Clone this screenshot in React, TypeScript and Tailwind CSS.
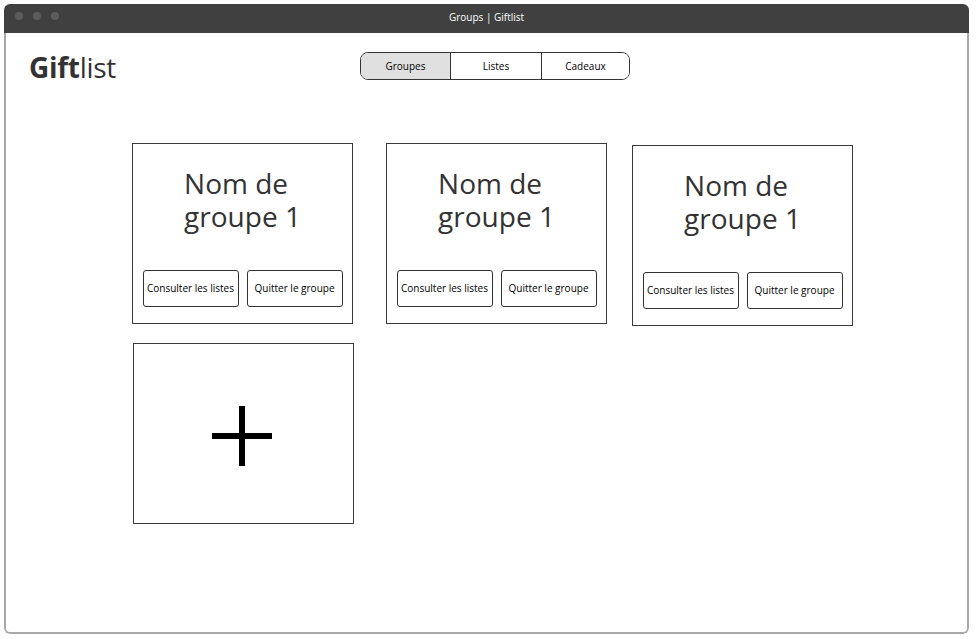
const font = { fontFamily: '"Open Sans", "Noto Sans", sans-serif' };

const tabs = [
  { label: "Groupes", active: true, width: "w-[89px]" },
  { label: "Listes", active: false, width: "w-[91px]" },
  { label: "Cadeaux", active: false, width: "w-[88px]" },
];

function GroupCard({ className }: { className: string }) {
  return (
    <div className={`flex h-[181px] w-[221px] flex-col items-center border border-[#3a3a3a] bg-white ${className}`}>
      <h2 className="mt-[23px] inline-block text-left text-[28px] leading-[33px] text-[#333]">
        Nom de
        <br />
        groupe 1
      </h2>
      <div className="mt-auto mb-[16px] flex gap-[8px]">
        <button className="h-[37px] w-[96px] rounded-[3px] border border-[#333] bg-white text-[10px] text-black">
          Consulter les listes
        </button>
        <button className="h-[37px] w-[96px] rounded-[3px] border border-[#333] bg-white text-[10px] text-black">
          Quitter le groupe
        </button>
      </div>
    </div>
  );
}

export default function App() {
  return (
    <div className="h-[639px] w-[979px] bg-white pt-[4px] pl-[4px]" style={font}>
      <div className="flex h-[630px] w-[965px] flex-col overflow-hidden rounded-t-[6px] rounded-b-[6px]">
        <div className="relative flex h-[29px] items-center justify-center bg-[#404040]">
          <div className="absolute left-[11px] top-[8px] flex gap-[10px]">
            <span className="h-[8px] w-[8px] rounded-full bg-[#5c5c5c]" />
            <span className="h-[8px] w-[8px] rounded-full bg-[#5c5c5c]" />
            <span className="h-[8px] w-[8px] rounded-full bg-[#5c5c5c]" />
          </div>
          <span className="-mt-[2px] text-[10px] text-white">Groups | Giftlist</span>
        </div>

        <div className="flex flex-1 flex-col rounded-b-[6px] border-x-2 border-b-2 border-[#a8a8a8] bg-white">
          <header className="relative flex h-[65px] items-start">
            <div className="ml-[23px] mt-[15px] text-[28px] leading-[38px] tracking-[-0.3px] text-[#333]">
              <span className="font-bold">Gift</span>
              <span>list</span>
            </div>
            <nav className="absolute left-[354px] top-[19px] flex h-[28px] overflow-hidden rounded-[8px] border border-[#333]">
              {tabs.map((t, i) => (
                <div
                  key={t.label}
                  className={`flex items-center justify-center text-[10px] text-black ${t.width} ${
                    t.active ? "bg-[#e0e0e0]" : "bg-white"
                  } ${i > 0 ? "border-l border-[#333]" : ""}`}
                >
                  {t.label}
                </div>
              ))}
            </nav>
          </header>

          <div className="ml-[126px] mt-[45px] flex items-start">
            <GroupCard className="" />
            <GroupCard className="ml-[33px]" />
            <GroupCard className="ml-[25px] mt-[2px]" />
          </div>
          <div className="ml-[127px] mt-[17px] flex">
            <div className="flex h-[181px] w-[221px] items-center justify-center border border-[#3a3a3a] bg-white">
              <svg width="60" height="60" viewBox="0 0 60 60" className="mt-[4px] ml-[-4px]">
                <rect x="0" y="27" width="60" height="6" fill="#000" />
                <rect x="27" y="0" width="6" height="60" fill="#000" />
              </svg>
            </div>
          </div>
        </div>
      </div>
    </div>
  );
}
